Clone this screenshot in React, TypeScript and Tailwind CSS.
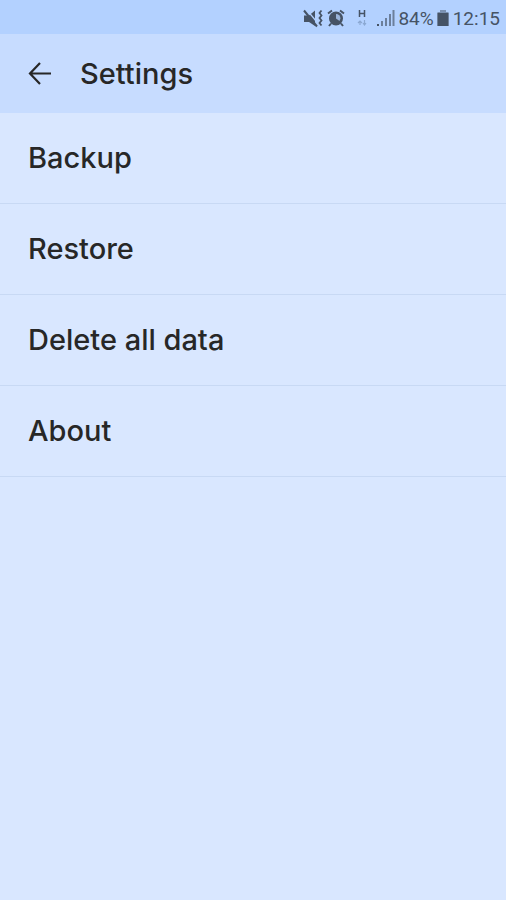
const menuItems = ['Backup', 'Restore', 'Delete all data', 'About'];

const StatusBar = () => {
  return (
    <div className="flex h-[34px] items-center justify-end bg-[#b3d1ff] pt-1 pr-[6px] font-['Roboto',sans-serif] text-[19px] font-normal leading-6 text-[#465365]">
      <svg className="h-5 w-5" viewBox="0 0 20 20" fill="currentColor" aria-label="Vibrate">
        <path d="M1 6.500h5l6-5v15.500l-6-4H1z" />
        <path d="M4 1l9 11" stroke="#b3d1ff" strokeWidth="1.2" />
        <path d="M1 1.500l13 16" stroke="currentColor" strokeWidth="2" fill="none" />
        <path
          d="M18.500 1.500l-2 2.500 2 2.500-2 2.500 2 2.500-2 2.500 2 2.500"
          stroke="currentColor"
          strokeWidth="1.8"
          fill="none"
        />
      </svg>
      <svg className="ml-1 h-5 w-[18px]" viewBox="0 0 18 20" fill="currentColor" aria-label="Alarm">
        <circle cx="9" cy="9.500" r="7" />
        <path d="M1 4.500l4-3M17 4.500l-4-3M4 14.500l-2 2.500M14 14.500l2 2.500" stroke="currentColor" strokeWidth="2" />
        <path d="M9 5a4.500 4.500 0 0 1 4.500 4.500L12.500 12 9 9.500z" fill="#9ab4da" />
      </svg>
      <svg className="ml-3 h-5 w-[10px]" viewBox="0 0 10 20" fill="none" aria-label="Mobile data">
        <path d="M2.500 1v7M7.500 1v7M2.500 4.500h5" stroke="currentColor" strokeWidth="1.500" />
        <path d="M3 16v-4M1 14l2-2 2 2M7.500 11v5M6 14l1.500 2L9 14" stroke="#8ba8d2" strokeWidth="1.2" />
      </svg>
      <svg className="ml-2 h-5 w-[20px]" viewBox="0 0 20 20" fill="currentColor" aria-label="Signal">
        <path d="M2 15h2v2H2z" />
        <path d="M6 12h2v5H6zM10 9h2v8h-2zM14 5h2v12h-2zM17.500 1h2v16h-2z" opacity="0.65" />
      </svg>
      <span className="ml-[3px]">84%</span>
      <svg className="ml-[3px] h-5 w-[12px]" viewBox="0 0 12 20" fill="currentColor" aria-label="Battery">
        <path d="M3 1h6v2h2.500v14H.5V3H3z" opacity="0.5" />
        <path d="M.5 4h11v13H.5z" />
      </svg>
      <span className="ml-1">12:15</span>
    </div>
  );
};

const App = () => {
  return (
    <div className="min-h-screen bg-[#d9e7ff] font-['Inter',sans-serif] text-[29px] font-medium leading-9 text-[#272727]">
      <StatusBar />
      <header className="flex h-[79px] items-center bg-[#c7dcff] px-7">
        <button type="button" aria-label="Back" className="flex h-6 w-6 items-center">
          <svg className="h-6 w-6" viewBox="0 0 24 24" fill="none" stroke="currentColor" strokeWidth="2.2">
            <path d="M12 1L2 11.500 12 22M2 11.500h21" />
          </svg>
        </button>
        <h1 className="ml-7">Settings</h1>
      </header>
      <ul>
        {menuItems.map((item) => (
          <li key={item} className="border-b border-[#c8d9f4]">
            <button type="button" className="flex h-[90px] w-full items-center px-7 text-left">
              {item}
            </button>
          </li>
        ))}
      </ul>
    </div>
  );
};

export default App;
